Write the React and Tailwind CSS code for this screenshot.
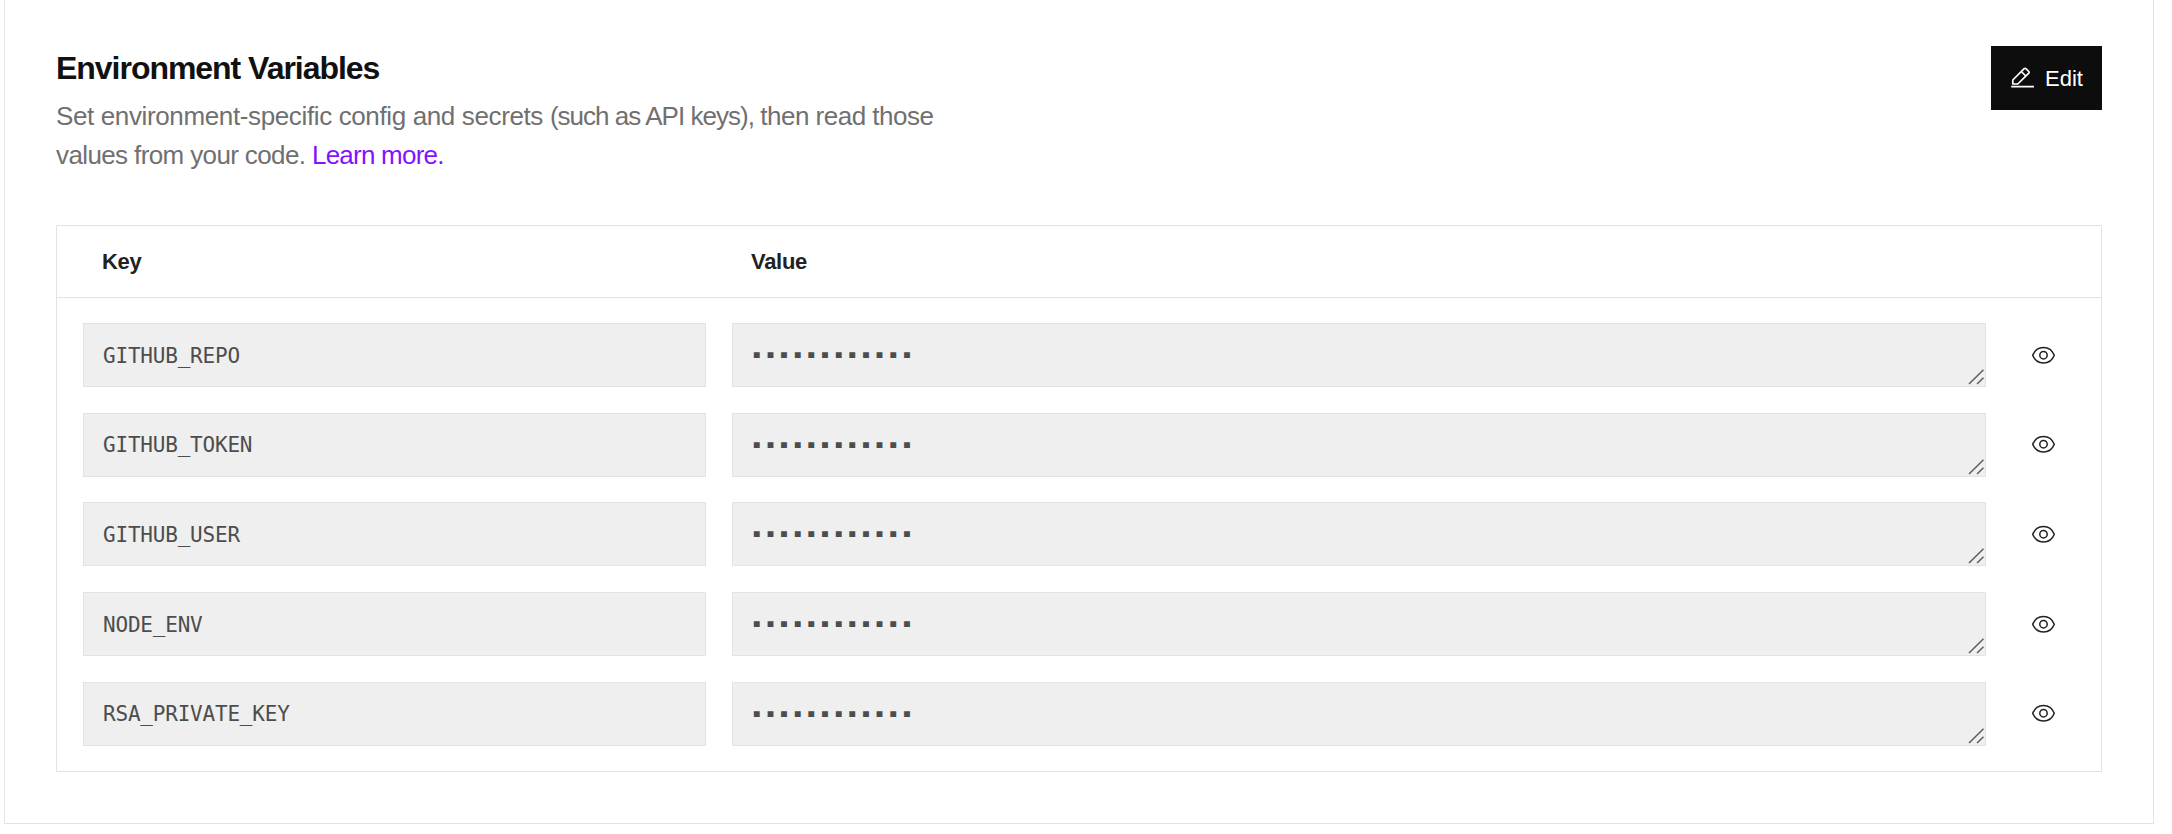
const VARIABLES = [
  { key: "GITHUB_REPO", height: "h-[90px]", text: "pt-[3px]", eye: "" },
  { key: "GITHUB_TOKEN", height: "h-[89px]", text: "pt-px", eye: "pb-0.5" },
  { key: "GITHUB_USER", height: "h-[90px]", text: "pt-[3px]", eye: "" },
  { key: "NODE_ENV", height: "h-[90px]", text: "pt-[3px]", eye: "" },
  { key: "RSA_PRIVATE_KEY", height: "h-[90px]", text: "pt-px", eye: "pb-0.5" },
];

function PencilIcon() {
  return (
    <svg width="24" height="24" viewBox="0 0 24 24" fill="none" stroke="currentColor" strokeWidth="1.7" strokeLinejoin="round">
      <path d="M2.8 14 14.200 2.600a1.200 1.200 0 0 1 1.700 0l2.900 2.900a1.200 1.200 0 0 1 0 1.700L7.800 18H2.800z" />
      <path d="m11.300 5.500 4.500 4.500M1.200 20.600H24" />
    </svg>
  );
}

function EyeIcon() {
  return (
    <svg width="24" height="24" viewBox="0 0 24 24" fill="none" stroke="currentColor" strokeWidth="1.5" strokeLinejoin="round">
      <path d="M1.700 12.200C3.500 7.700 7.700 4.400 12.500 4.400s9 3.300 10.800 7.800c-1.800 4.500-6 7.800-10.800 7.800S3.500 16.700 1.700 12.200z" />
      <circle cx="12.500" cy="12.200" r="3.700" />
    </svg>
  );
}

function ResizeGrip() {
  return (
    <svg className="absolute right-[1px] bottom-[1px]" width="16" height="16" viewBox="0 0 16 16" fill="none" stroke="#5c5c5c" strokeWidth="1.500">
      <path d="M1 15 15.500.700M9 15l6.500-6.200" />
    </svg>
  );
}

function VariableRow({ name, height, text, eye }) {
  return (
    <div className={`flex items-start ${height}`}>
      <div className={`flex h-16 w-[623px] shrink-0 items-center border border-[#e3e3e3] bg-[#efefef] pl-[19px] font-['DejaVu_Sans_Mono',monospace] text-[21px] tracking-[-0.2px] text-[#4d4d4d] ${text}`}>
        {name}
      </div>
      <div className="relative ml-[26px] flex h-16 w-[1254px] shrink-0 items-center border border-[#e3e3e3] bg-[#efefef] pb-0.5 pl-[19px] font-['DejaVu_Sans_Mono',monospace] text-[15px] tracking-[4.62px] text-[#4d4d4d]">
        ▪▪▪▪▪▪▪▪▪▪▪▪
        <ResizeGrip />
      </div>
      <button className={`mr-px flex h-16 flex-1 items-center justify-center text-[#222] ${eye}`} aria-label="Reveal">
        <EyeIcon />
      </button>
    </div>
  );
}

export default function App() {
  return (
    <div className="h-[834px] w-[2172px] bg-white pl-1 font-['Liberation_Sans',Arial,sans-serif]">
      <section className="h-[824px] w-[2150px] border-x border-b border-[#e3e3e3] px-[51px] pt-[46px]">
        <header className="flex h-[179px] items-start justify-between">
          <div>
            <h2 className="mt-[3px] text-[32px] leading-[38px] font-bold tracking-[-1.03px] text-[#111]">
              Environment Variables
            </h2>
            <p className="mt-[10px] text-[26px] leading-[39px] tracking-[-0.37px] whitespace-nowrap text-[#707070]">
              Set environment-specific config and secrets{" "}
              <span className="tracking-[-0.97px]">(such as API keys), </span>
              <span className="tracking-[-0.5px]">then read those</span>
              <br />
              <span className="tracking-[-0.62px]">values from your code. </span>
              <a className="tracking-[-0.77px] text-[#8213ff]">Learn more.</a>
            </p>
          </div>
          <button className="flex h-16 w-[111px] items-center gap-[11px] bg-[#0d0d0d] pl-[19px] text-[22px] text-white">
            <PencilIcon />
            <span>Edit</span>
          </button>
        </header>
        <div className="h-[547px] w-[2046px] border border-[#e3e3e3]">
          <div className="flex h-[72px] items-center border-b border-[#e3e3e3] pl-[45px] text-[22px] font-bold tracking-[-0.3px] text-[#222]">
            <span className="w-[649px]">Key</span>
            <span>Value</span>
          </div>
          <div className="pt-[25px] pl-[26px]">
            {VARIABLES.map((v) => (
              <VariableRow key={v.key} name={v.key} height={v.height} text={v.text} eye={v.eye} />
            ))}
          </div>
        </div>
      </section>
    </div>
  );
}
